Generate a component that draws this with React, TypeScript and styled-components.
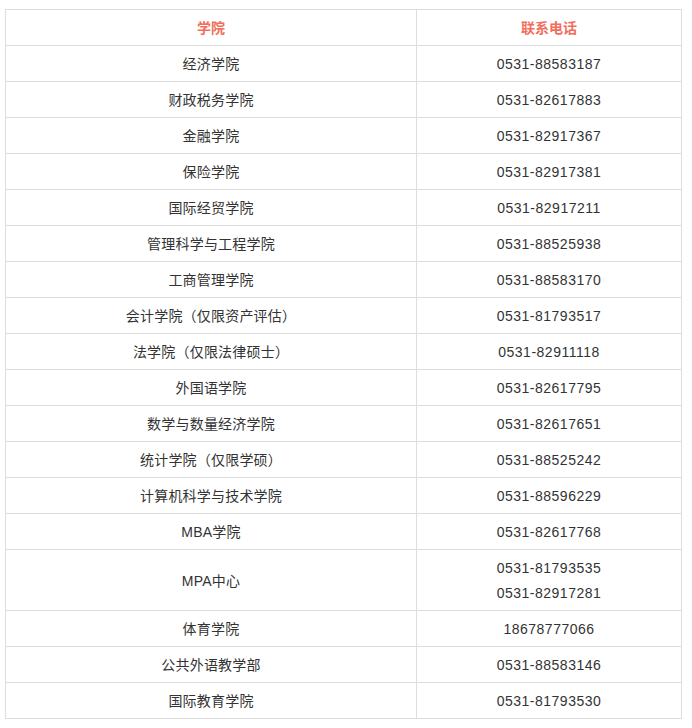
import React from "react";
import styled, { createGlobalStyle } from "styled-components";

const Global = createGlobalStyle`
  html, body { margin: 0; padding: 0; background: #fff; }
  body { font-family: "Liberation Sans", Arial, "Noto Sans CJK SC", sans-serif; }
`;

const Page = styled.div`
  padding: 9px 0 0 5px;
`;

const Table = styled.table`
  border-collapse: collapse;
  width: 677px;
  table-layout: fixed;
  font-size: 14px;
  color: #333;
`;

const Th = styled.th<{ $w?: number }>`
  border: 1px solid #ddd;
  padding: 6px 0 4px;
  line-height: 25px;
  font-weight: bold;
  color: #f26d5b;
  text-align: center;
  width: ${(p) => (p.$w ? `${p.$w}px` : "auto")};
`;

const Td = styled.td<{ $phone?: boolean }>`
  border: 1px solid #ddd;
  padding: 6px 0 4px;
  line-height: 25px;
  text-align: center;
  vertical-align: middle;
  letter-spacing: ${(p) => (p.$phone ? "0.5px" : "0.2px")};
`;

const Line = styled.div``;

const rows: [string, string[]][] = [
  ["经济学院", ["0531-88583187"]],
  ["财政税务学院", ["0531-82617883"]],
  ["金融学院", ["0531-82917367"]],
  ["保险学院", ["0531-82917381"]],
  ["国际经贸学院", ["0531-82917211"]],
  ["管理科学与工程学院", ["0531-88525938"]],
  ["工商管理学院", ["0531-88583170"]],
  ["会计学院（仅限资产评估）", ["0531-81793517"]],
  ["法学院（仅限法律硕士）", ["0531-82911118"]],
  ["外国语学院", ["0531-82617795"]],
  ["数学与数量经济学院", ["0531-82617651"]],
  ["统计学院（仅限学硕）", ["0531-88525242"]],
  ["计算机科学与技术学院", ["0531-88596229"]],
  ["MBA学院", ["0531-82617768"]],
  ["MPA中心", ["0531-81793535", "0531-82917281"]],
  ["体育学院", ["18678777066"]],
  ["公共外语教学部", ["0531-88583146"]],
  ["国际教育学院", ["0531-81793530"]],
];

export default function App() {
  return (
    <>
      <Global />
      <Page>
        <Table>
          <thead>
            <tr>
              <Th $w={410}>学院</Th>
              <Th>联系电话</Th>
            </tr>
          </thead>
          <tbody>
            {rows.map(([name, phones]) => (
              <tr key={name}>
                <Td>{name}</Td>
                <Td $phone>
                  {phones.map((p) => (
                    <Line key={p}>{p}</Line>
                  ))}
                </Td>
              </tr>
            ))}
          </tbody>
        </Table>
      </Page>
    </>
  );
}
